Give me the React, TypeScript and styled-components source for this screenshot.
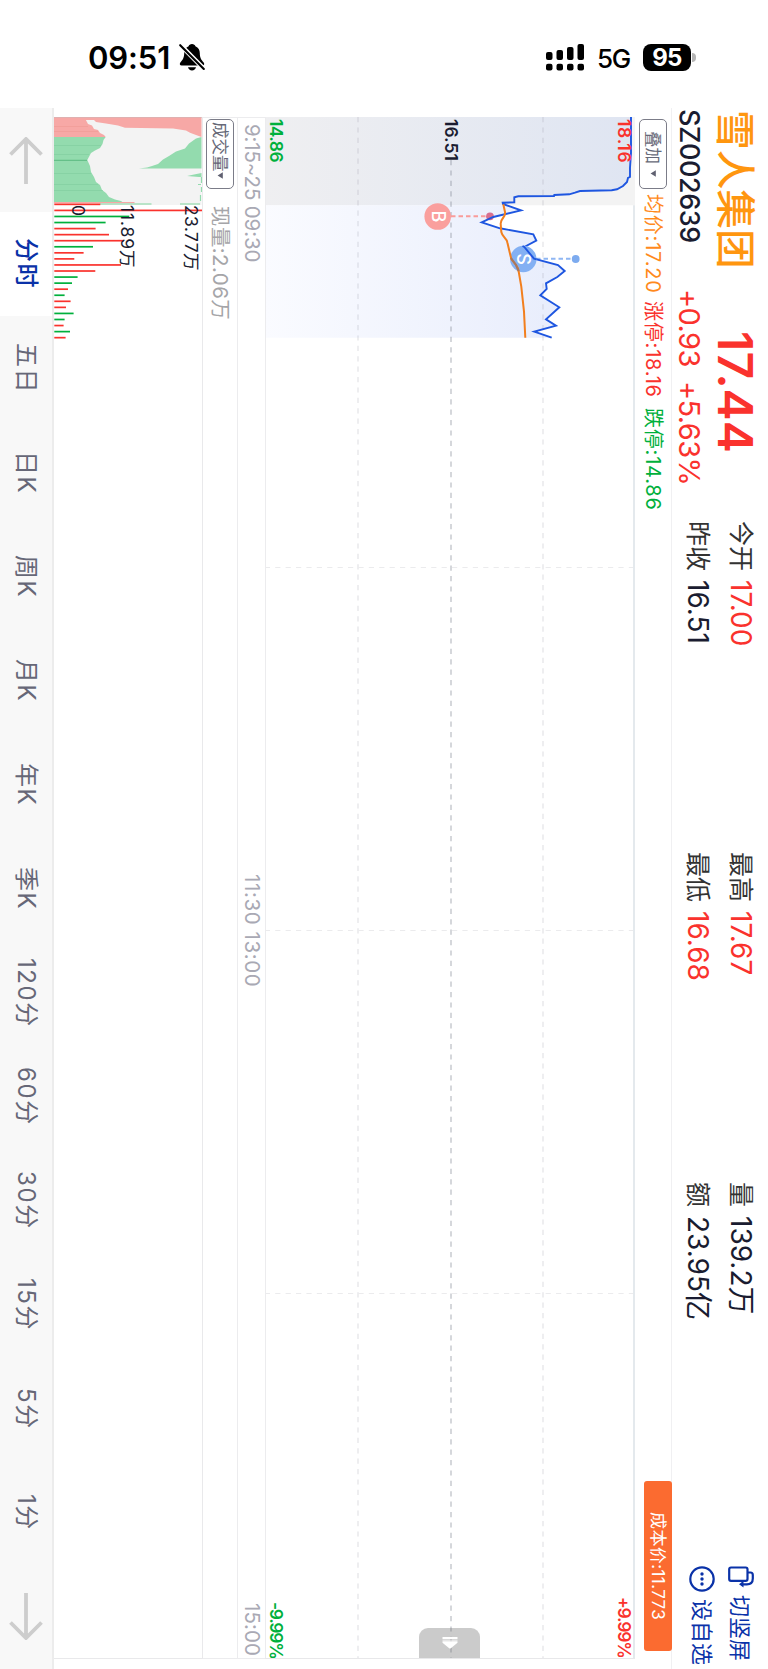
import * as React from 'react';
import styled, { createGlobalStyle, css } from 'styled-components';

const RED = '#fa322d';
const GREEN = '#00b03c';
const INK = '#1a1c30';
const ORANGE = '#ff8a1c';
const BLUE = '#0a32a8';

const stats = [
	[
		{ label: '今开', value: '17.00', color: RED },
		{ label: '昨收', value: '16.51', color: INK },
	],
	[
		{ label: '最高', value: '17.67', color: RED },
		{ label: '最低', value: '16.68', color: RED },
	],
	[
		{ label: '量', value: '139.2万', color: INK },
		{ label: '额', value: '23.95亿', color: INK },
	],
];

const periods = ['分时', '五日', '日K', '周K', '月K', '年K', '季K', '120分', '60分', '30分', '15分', '5分', '1分'];

const PRICE_LINE =
	'631,117 631,153 630,168 630,177 628,178 627,182 623,186 617,189.3 611.7,190.3 580,191 575,192.7 569.3,194.3 554.3,195 554,196 518.3,196.3 514.3,197.3 514.3,202.4 502.7,202.7 503,204 521,210.3 493.3,217 481.7,222.3 500,228.3 533.3,234.3 536.3,240.7 524.3,247 534,258.7 558,265 564.7,271 557.3,277 546,283.3 546.7,289 540.3,295.3 559.3,307.3 546,319.3 556,325.7 534.3,331.7 551.7,337.7';
const AUCTION_AREA =
	'265,117 631,117 631,153 630,168 630,177 628,178 627,182 623,186 617,189.3 611.7,190.3 580,191 575,192.7 569.3,194.3 554.3,195 554,196 518.3,196.3 514.3,197.3 514.3,202.4 502.7,202.7 503,205.3 265,205.3';
const TRADE_AREA =
	'265,205.3 506,205.3 521,210.3 493.3,217 481.7,222.3 500,228.3 533.3,234.3 536.3,240.7 524.3,247 534,258.7 558,265 564.7,271 557.3,277 546,283.3 546.7,289 540.3,295.3 559.3,307.3 546,319.3 556,325.7 534.3,331.7 551.7,337.7 265,337.7';
const AVG_LINE =
	'M503.3 204.3L505 212Q505.500 215 503 218Q500.500 221 500.700 224L501.300 232Q502 235 504.500 237.500Q507 240 507.500 243L510.300 255L511.300 259L516 265Q518.300 268 518.600 271L521.300 286.700L524 311.700L525.300 337.700';

// [length, is rising]
const volumes: [number, boolean][] = [
	[46, true], [148, true], [75, false], [51.3, false], [41.3, true], [54.7, true], [69.7, true], [38.7, false],
	[29.3, true], [20, true], [66.7, true], [41, true], [23.3, false], [17.7, false], [13.7, true], [10.3, false],
	[16.3, true], [11.7, true], [19.3, false], [10.3, false], [9.3, true], [15.7, false], [11.3, true],
];

const App: React.FC = () => {
	return (
		<Page>
			<GlobalStyle />
			<StatusBar>
				<StatusTime>09:51</StatusTime>
				<BellOff />
				<StatusRight>
					<Signal />
					<Network>5G</Network>
					<Battery>95</Battery>
					<BatteryCap />
				</StatusRight>
			</StatusBar>
			<Screen>
				<Header>
					<Identity>
						<NameLine>
							<StockName>雪人集团</StockName>
							<Price>17.44</Price>
						</NameLine>
						<CodeLine>
							<Code>SZ002639</Code>
							<Change>+0.93</Change>
							<Change>+5.63%</Change>
						</CodeLine>
					</Identity>
					<Stats>
						{stats.map((col, i) => (
							<StatCol key={i}>
								{col.map((s) => (
									<Stat key={s.label}>
										<StatLabel>{s.label}</StatLabel>
										<StatValue $color={s.color}>{s.value}</StatValue>
									</Stat>
								))}
							</StatCol>
						))}
					</Stats>
					<Actions>
						<Action>
							<RotateIcon />
							切竖屏
						</Action>
						<Action>
							<MoreIcon />
							设自选
						</Action>
					</Actions>
				</Header>

				<InfoRow>
					<Picker $pad={11}>
						叠加
						<Caret />
					</Picker>
					<InfoText $color={ORANGE}>均价:17.20</InfoText>
					<InfoText $color={RED}>涨停:18.16</InfoText>
					<InfoText $color={GREEN}>跌停:14.86</InfoText>
					<CostTag>成本价:11.773</CostTag>
				</InfoRow>

				<PriceChart>
					<PriceDrawing />
					<ScaleLabel $x={351} $color={RED} $gap={0.7}>18.16</ScaleLabel>
					<ScaleLabel $x={177.5} $color={INK} $gap={0}>16.51</ScaleLabel>
					<ScaleLabel $x={2.5} $color={GREEN} $gap={-0.6}>14.86</ScaleLabel>
					<ScaleLabel $x={351} $color={RED} $gap={-1.2} $end>+9.99%</ScaleLabel>
					<ScaleLabel $x={2.5} $color={GREEN} $gap={-1.3} $end>-9.99%</ScaleLabel>
					<Handle>
						<svg width="16" height="12" viewBox="0 0 16 12">
							<path d="M0.500 0h15v2h-15zM0.500 2.700h15v.7h-15zM0.500 4.300h15v1.500L8.500 11.500h-1L0.500 5.800z" fill="#fff" />
						</svg>
					</Handle>
				</PriceChart>

				<TimeAxis>
					<AxisTime $gap={-0.15}>9:15~25 09:30</AxisTime>
					<AxisTime $gap={0.6}>11:30 13:00</AxisTime>
					<AxisTime $gap={0.1}>15:00</AxisTime>
				</TimeAxis>

				<VolumeHead>
					<Picker $pad={2}>
						成交量
						<Caret />
					</Picker>
					<VolumeNow>现量:2.06万</VolumeNow>
				</VolumeHead>

				<VolumeChart>
					<VolumeDrawing />
					<VolumeLabel $x={127} $gap={0.4}>23.77万</VolumeLabel>
					<VolumeLabel $x={63} $gap={0.9}>11.89万</VolumeLabel>
					<VolumeLabel $x={13.5} $gap={0}>0</VolumeLabel>
				</VolumeChart>

				<Tabs>
					<Tab>
						<TabArrow d="M17 2V47M1.500 17.500L17 2L32.500 17.500" />
					</Tab>
					{periods.map((p, i) => (
						<Tab key={p} $active={i === 0}>
							{p}
						</Tab>
					))}
					<Tab>
						<TabArrow d="M17 0V45M1.500 29.500L17 45L32.500 29.500" />
					</Tab>
				</Tabs>
			</Screen>
		</Page>
	);
};

const PriceDrawing: React.FC = () => (
	<svg width="370" height="1542" viewBox="265 117 370 1542">
		<defs>
			<linearGradient id="auction" x1="265" x2="632" y1="0" y2="0" gradientUnits="userSpaceOnUse">
				<stop offset="0" stopColor="#efeff1" />
				<stop offset="1" stopColor="#dfe5f2" />
			</linearGradient>
			<linearGradient id="trade" x1="265" x2="565" y1="0" y2="0" gradientUnits="userSpaceOnUse">
				<stop offset="0" stopColor="#fafbff" />
				<stop offset="1" stopColor="#e8edfc" />
			</linearGradient>
		</defs>
		<rect x="265" y="117" width="370" height="88.300" fill="#f3f3f3" />
		<polygon points={AUCTION_AREA} fill="url(#auction)" />
		<polygon points={TRADE_AREA} fill="url(#trade)" />
		<g stroke="#8a8f9c" strokeOpacity="0.150" strokeWidth="2" strokeDasharray="5.200 5.200">
			<path d="M358 117V1659M543 117V1659" />
			<path d="M451 160V1659" strokeOpacity="0.360" />
		</g>
		<g stroke="#ebebed" strokeWidth="1.200" strokeDasharray="5.200 5.200">
			<path d="M634 567.500H266M634 930.500H266M634 1293.500H266" />
		</g>
		<path d="M265.500 117V1659" stroke="#ececee" />
		<path d="M634 205.300V1659" stroke="#e4e9ed" strokeWidth="2" />
		<path d="M265 1658.500H635" stroke="#e8e8ea" />
		<path d="M451 216.300H487" stroke="#f99c9a" strokeWidth="2" strokeDasharray="4.500 3" />
		<circle cx="490" cy="216.300" r="3.900" fill="#d76f90" />
		<circle cx="437.700" cy="216.500" r="13.300" fill="#fa9f9d" />
		<path d="M536 258.700H573" stroke="#8fb6f3" strokeWidth="2" strokeDasharray="4.500 3" />
		<circle cx="575.700" cy="259" r="3.900" fill="#7dabef" />
		<polyline points={PRICE_LINE} fill="none" stroke="#1e56e0" strokeWidth="1.900" />
		<circle cx="523.300" cy="259" r="13.200" fill="#83b0f3" />
		<path d="M522.500 246L524.300 247L534 258.700L536.500 259.300" fill="none" stroke="#1e56e0" strokeWidth="1.900" />
		<path d={AVG_LINE} fill="none" stroke="#f27f1e" strokeWidth="2" />
		<path d="M511 258L516 265L518.600 271" fill="none" stroke="#a8785f" strokeWidth="2" />
		<Marker transform="translate(431.500 216.500) rotate(90)">B</Marker>
		<Marker transform="translate(516.500 259) rotate(90)">S</Marker>
	</svg>
);

const VolumeDrawing: React.FC = () => (
	<svg width="149" height="1542" viewBox="54 117 149 1542">
		<rect x="54" y="117" width="147.500" height="88" fill="#f3f3f3" />
		<path d="M54 117H201.500V137L196 135L190 132.700L186 130.500L173 128.500L125 127.700L118 125.500L106 123.500L96 122L94 120H85V118.300L88 124L92 125.500L94 129L98 130L100 133L104 135L105.700 137H54Z" fill="#f7a8a6" />
		<path d="M54 137H105.700L103.500 140L102.500 144L100 148L95 150.500L91 153L87.300 160L90 166L91 172L94 177L96 182L100 185L102 190L106 193L109 197L115 199.500L121 201L123 202.500H54Z" fill="#93dbae" />
		<path d="M201.500 137L196 138.500L189 143.500L185 148.500L176 151.500L169 156L163 159.500L158 164L152 166L147 167.500L139 168.500H201.500ZM201.500 173L194 174.500L187 176L199 177H201.500Z" fill="#93dbae" />
		<path d="M201.500 177V183M198 184.500H201M201.500 187V192M200.500 195V201" stroke="#93dbae" strokeWidth="1.200" />
		<path d="M54 126.500H88M54 131.500H98" stroke="#ee9894" strokeWidth=".6" />
		<path d="M54 145.500H101M54 154.500H89M54 173.500H91M54 184.500H98M54 190.500H103" stroke="#7fcc9d" strokeWidth=".6" />
		<path d="M54 160.300H87" stroke="#55b67c" strokeWidth=".9" />
		<path d="M54 202.600H134.500" stroke="#f7a8a6" strokeWidth="1.400" />
		<path d="M100 204H151.500M180 204H200" stroke="#a7dfbb" strokeWidth="1.600" />
		{volumes.map(([len, up], i) => (
			<rect key={i} x="54.300" y={203.500 + i * 6.060} width={len} height="1.700" fill={up ? RED : GREEN} />
		))}
		<path d="M54 117.500H203" stroke="#c9b8ba" strokeOpacity=".5" />
		<path d="M202.500 117V1659" stroke="#e9e9eb" />
		<path d="M54 1658.500H203" stroke="#e9e9eb" />
	</svg>
);

const BellOff: React.FC = () => (
	<svg width="26" height="28" viewBox="0 0 26 28">
		<path
			d="M13 1C11.200 1 10 2 9.600 3.200C6.500 4.400 5.200 7 5.200 10C5.200 15 3.500 17 1.500 19.200C.2 20.700 .8 22.500 2.600 22.500H23.400C25.200 22.500 25.800 20.700 24.500 19.200C22.500 17 20.800 15 20.800 10C20.800 7 19.500 4.400 16.400 3.200C16 2 14.800 1 13 1ZM9 24.200H17C16.600 26.200 15 27.400 13 27.400C11 27.400 9.400 26.200 9 24.200Z"
			fill="#000"
		/>
		<path d="M1.500 2L25 26" stroke="#fff" strokeWidth="4.600" />
		<path d="M1.200 2.200L24.800 26" stroke="#000" strokeWidth="2.100" strokeLinecap="round" />
	</svg>
);

const Signal: React.FC = () => (
	<svg width="38" height="27" viewBox="0 0 38 27">
		{[8, 6, 3, 0].map((top, i) => (
			<g key={top}>
				<rect x={i * 10.500} y={top} width="6.500" height={16 - top} rx="2" />
				<rect x={i * 10.500} y="19.700" width="6.500" height="6.800" rx="2" />
			</g>
		))}
	</svg>
);

const RotateIcon: React.FC = () => (
	<RotateSvg width="26" height="22" viewBox="0 0 26 22" fill="none" stroke={BLUE} strokeWidth="2.200">
		<rect x="1.200" y="1.500" width="18.300" height="13.300" rx="1.800" />
		<path d="M19 6.500H22.500Q24.800 6.500 24.800 9V12.500Q24.800 18.300 18.800 18.300H13.500" />
		<path d="M15.500 14.800V21.600L11 18.300Z" fill={BLUE} stroke="none" />
	</RotateSvg>
);

const MoreIcon: React.FC = () => (
	<svg width="26" height="26" viewBox="0 0 26 26">
		<circle cx="13" cy="13" r="11.700" fill="none" stroke={BLUE} strokeWidth="2.200" />
		<circle cx="13" cy="8" r="1.700" fill={BLUE} />
		<circle cx="13" cy="13" r="1.700" fill={BLUE} />
		<circle cx="13" cy="18" r="1.700" fill={BLUE} />
	</svg>
);

const TabArrow: React.FC<{ d: string }> = ({ d }) => (
	<svg width="34" height="47" viewBox="0 0 34 47">
		<path d={d} fill="none" stroke="#cdcdcd" strokeWidth="3.800" />
	</svg>
);

const Caret: React.FC = () => (
	<svg width="7" height="7" viewBox="0 0 6 6">
		<path d="M5 .3V5.700L0.500 3Z" fill="#5f6070" />
	</svg>
);

const GlobalStyle = createGlobalStyle`
	* {
		box-sizing: border-box;
	}
	body {
		margin: 0;
		background: #fff;
		font-family: Inter, 'Noto Sans CJK SC', sans-serif;
	}
	svg {
		display: block;
		flex-shrink: 0;
	}
`;

const Page = styled.div`
	width: 768px;
	height: 1669px;
	overflow: hidden;
	display: flex;
	flex-direction: column;
	background: #fff;
`;

const StatusBar = styled.div`
	height: 108px;
	flex-shrink: 0;
	display: flex;
	align-items: center;
	padding: 6px 72px 0px 88px;
	color: #000;
`;

const StatusTime = styled.div`
	width: 91px;
	font-size: 31px;
	font-weight: 600;
	letter-spacing: -0.1px;
`;

const StatusRight = styled.div`
	margin-left: auto;
	display: flex;
	align-items: center;
`;

const Network = styled.div`
	width: 47px;
	padding: 2px 0px 0px 13px;
	font-size: 26px;
	font-weight: 500;
	letter-spacing: -1.2px;
`;

const Battery = styled.div`
	width: 48px;
	height: 27px;
	margin-left: 12px;
	border-radius: 8px;
	background: #000;
	color: #fff;
	font-size: 24px;
	font-weight: 700;
	line-height: 27px;
	text-align: center;
	letter-spacing: -0.6px;
`;

const BatteryCap = styled.div`
	width: 4px;
	height: 9px;
	margin-left: 1px;
	border-radius: 0px 4px 4px 0px;
	background: #b5b5b5;
`;

// 横屏内容: 行方向从上到下, 块方向从右到左
const Screen = styled.div`
	flex: 1;
	display: flex;
	flex-direction: column;
	writing-mode: vertical-rl;
	text-orientation: sideways;
	white-space: nowrap;
`;

const Header = styled.div`
	width: 96px;
	flex-shrink: 0;
	display: flex;
`;

const Identity = styled.div`
	height: 413px;
	flex-shrink: 0;
	padding-right: 10px;
`;

const NameLine = styled.div`
	display: flex;
	width: 46px;
	line-height: 46px;
	padding-top: 2px;
`;

const StockName = styled.div`
	height: 221px;
	font-size: 39.7px;
	font-weight: 500;
	color: #ff960f;
`;

const Price = styled.div`
	font-size: 48px;
	font-weight: 600;
	color: ${RED};
	letter-spacing: 0.1px;
`;

const CodeLine = styled.div`
	display: flex;
	width: 34px;
	margin-right: 6px;
	line-height: 34px;
	padding-top: 1px;
`;

const Code = styled.div`
	height: 180px;
	font-size: 27px;
	font-weight: 500;
	color: ${INK};
	letter-spacing: -0.4px;
`;

const Change = styled.div`
	height: 92px;
	font-size: 29px;
	color: ${RED};
	letter-spacing: -0.6px;
`;

const Stats = styled.div`
	display: flex;
	padding-right: 6px;
`;

const StatCol = styled.div`
	height: 330.5px;
`;

const Stat = styled.div`
	display: flex;
	width: 43px;
	line-height: 43px;
	gap: 9px;
`;

const StatLabel = styled.div`
	font-size: 25px;
	color: #333;
`;

const StatValue = styled.div<{ $color: string }>`
	font-size: 28px;
	color: ${(p) => p.$color};
	letter-spacing: 0px;
`;

const Actions = styled.div`
	padding: 53px 9px 0px 0px;
`;

const Action = styled.div`
	display: flex;
	align-items: center;
	width: 38px;
	gap: 7px;
	color: ${BLUE};
	font-size: 22px;
	line-height: 38px;
`;

const RotateSvg = styled.svg`
	margin-left: 2px;
`;

const InfoRow = styled.div`
	width: 37px;
	flex-shrink: 0;
	display: flex;
	align-items: center;
	padding: 11px 0px 18px 0px;
	border-right: 1px solid #f0f0f2;
	line-height: 36px;
`;

const Picker = styled.div<{ $pad: number }>`
	display: flex;
	align-items: center;
	justify-content: space-between;
	width: 28px;
	height: 70px;
	padding: ${(p) => p.$pad}px 0px 11px 0px;
	border: 1px solid #7b7c88;
	border-radius: 5px;
	color: #666877;
	font-size: 16.5px;
	line-height: 26px;
`;

const InfoText = styled.div<{ $color: string }>`
	height: 107px;
	padding-top: 5px;
	font-size: 20px;
	letter-spacing: 0.8px;
	color: ${(p) => p.$color};
`;

const CostTag = styled.div`
	display: flex;
	justify-content: center;
	align-items: center;
	align-self: flex-start;
	width: 28px;
	height: 170px;
	margin-top: auto;
	margin-right: -1px;
	border-radius: 3px;
	background: #fb6b30;
	color: #fff;
	font-size: 17px;
	line-height: 28px;
	letter-spacing: 0.4px;
`;

const PriceChart = styled.div`
	position: relative;
	width: 370px;
	height: 1542px;
	margin-top: 9px;
	flex-shrink: 0;
`;

const ScaleLabel = styled.div<{ $x: number; $color: string; $gap: number; $end?: boolean }>`
	position: absolute;
	left: ${(p) => p.$x}px;
	width: 16px;
	font-size: 17.5px;
	font-weight: 600;
	line-height: 16px;
	letter-spacing: ${(p) => p.$gap}px;
	color: ${(p) => p.$color};
	${(p) =>
		p.$end
			? css`
					bottom: 1px;
			  `
			: css`
					top: 2px;
			  `}
`;

const Handle = styled.div`
	position: absolute;
	left: 154px;
	bottom: 1px;
	width: 61px;
	height: 30px;
	display: flex;
	justify-content: center;
	align-items: center;
	border-radius: 9px 9px 0px 0px;
	background: rgba(110, 110, 110, 0.36);
`;

const Marker = styled.text`
	font-size: 18px;
	font-weight: 500;
	fill: #fff;
	text-anchor: middle;
	writing-mode: horizontal-tb;
`;

const TimeAxis = styled.div`
	width: 28px;
	height: 1542px;
	margin-top: 9px;
	flex-shrink: 0;
	display: flex;
	justify-content: space-between;
	padding: 6px 0px 2px 0px;
	border-top: 1px solid #ececee;
	border-left: 1px solid #ececee;
	border-bottom: 1px solid #ececee;
	color: #a9a9b4;
	font-size: 20.5px;
	line-height: 25px;
`;

const AxisTime = styled.div<{ $gap: number }>`
	letter-spacing: ${(p) => p.$gap}px;
	&:nth-child(2) {
		margin-bottom: 4px;
	}
`;

const VolumeHead = styled.div`
	width: 34px;
	height: 1542px;
	margin-top: 9px;
	flex-shrink: 0;
	display: flex;
	align-items: center;
	padding-top: 1px;
	border-top: 1px solid #ececee;
	border-bottom: 1px solid #ececee;
	line-height: 34px;
`;

const VolumeNow = styled.div`
	padding-top: 17px;
	font-size: 20.5px;
	letter-spacing: 0.4px;
	color: #a5a5a8;
`;

const VolumeChart = styled.div`
	position: relative;
	width: 149px;
	height: 1542px;
	margin-top: 9px;
	flex-shrink: 0;
`;

const VolumeLabel = styled.div<{ $x: number; $gap: number }>`
	position: absolute;
	top: 88px;
	left: ${(p) => p.$x}px;
	width: 20px;
	font-size: 17.5px;
	line-height: 20px;
	letter-spacing: ${(p) => p.$gap}px;
	color: ${INK};
`;

const Tabs = styled.div`
	width: 54px;
	flex-shrink: 0;
	display: flex;
	border-right: 2px solid #ececec;
	background: #f8f8f8;
`;

const Tab = styled.div<{ $active?: boolean }>`
	flex: 1;
	display: flex;
	justify-content: center;
	align-items: center;
	font-size: 24px;
	line-height: 52px;
	letter-spacing: 1.6px;
	color: #666777;
	${(p) =>
		p.$active &&
		css`
			background: #fff;
			color: ${BLUE};
			font-weight: 500;
		`}
`;

export default App;
